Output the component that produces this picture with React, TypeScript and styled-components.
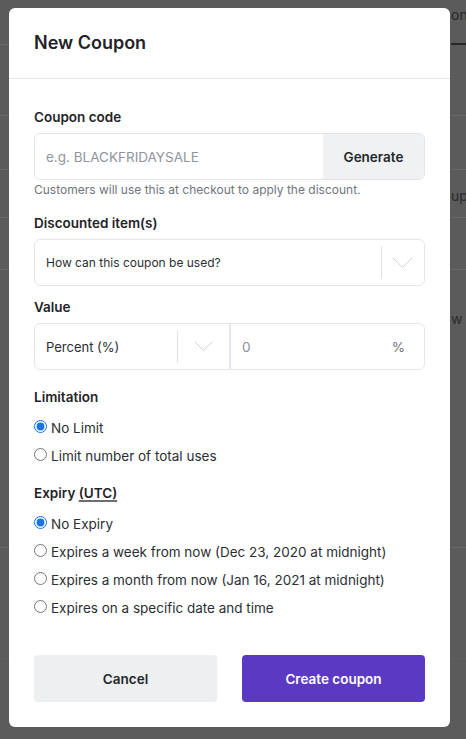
import React from "react";
import styled, { createGlobalStyle } from "styled-components";

const Global = createGlobalStyle`
  html, body { margin: 0; padding: 0; }
  body {
    background: #5b5b5b;
    font-family: Inter, "Noto Sans", "Liberation Sans", sans-serif;
    -webkit-font-smoothing: antialiased;
    overflow: hidden;
  }
  #root { position: relative; width: 466px; height: 739px; overflow: hidden; }
`;

/* ---------- dimmed page behind the modal ---------- */
const Backdrop = styled.div`
  display: flex;
  flex-direction: column;
  width: 466px;
  height: 739px;
  color: #262626;
  font-size: 14px;
`;

const BgHeader = styled.div`
  height: 44px;
  display: flex;
  align-items: flex-start;
  border-bottom: 1px solid #686868;
`;

const BgTab = styled.div`
  margin-left: 451px;
  padding-top: 5px;
  height: 38px;
  flex: 1;
  border-bottom: 2px solid #262626;
  white-space: nowrap;
  overflow: hidden;
  line-height: 20px;
`;

const BgRow = styled.div<{ $h: number; $pt?: number; $faint?: boolean }>`
  height: ${(p) => p.$h}px;
  box-sizing: border-box;
  flex-shrink: 0;
  padding-left: 451px;
  padding-top: ${(p) => p.$pt ?? 0}px;
  line-height: 20px;
  white-space: nowrap;
  overflow: hidden;
  border-bottom: 1px solid ${(p) => (p.$faint ? "#606060" : "#686868")};
  color: #2a2a2a;
`;

/* ---------- modal ---------- */
const Modal = styled.div`
  position: absolute;
  top: 8px;
  left: 9px;
  width: 441px;
  height: 719px;
  background: #ffffff;
  border-radius: 6px;
  display: flex;
  flex-direction: column;
  overflow: hidden;
`;

const Header = styled.div`
  padding: 23px 25px 23px;
  border-bottom: 1px solid #e3e8ee;
`;

const Title = styled.h2`
  margin: 0;
  font-size: 18px;
  line-height: 24px;
  font-weight: 600;
  color: #1f2328;
`;

const Body = styled.div`
  padding: 28px 25px 25px;
  display: flex;
  flex-direction: column;
  flex: 1;
`;

const Group = styled.div<{ $mt?: number }>`
  display: flex;
  flex-direction: column;
  margin-top: ${(p) => p.$mt ?? 0}px;
`;

const Label = styled.div`
  font-size: 13.5px;
  line-height: 20px;
  font-weight: 600;
  color: #1f2328;
  margin-bottom: 6px;
`;

const Underlined = styled.span`
  text-decoration: underline;
  text-decoration-thickness: 1.5px;
  text-underline-offset: 2px;
  text-decoration-color: #6b6f74;
`;

const InputGroup = styled.div`
  display: flex;
  height: 47px;
  border: 1px solid #e2e5e9;
  border-radius: 6px;
  box-sizing: border-box;
  overflow: hidden;
`;

const TextInput = styled.input`
  flex: 1;
  min-width: 0;
  border: none;
  outline: none;
  padding: 0 11px;
  font-family: inherit;
  font-size: 13.5px;
  color: #1f2328;
  background: transparent;
  &::placeholder { color: #8f959c; }
`;

const GenerateButton = styled.button`
  width: 101px;
  border: none;
  background: #eff1f3;
  font-family: inherit;
  font-size: 13.5px;
  font-weight: 600;
  color: #23272b;
  padding: 0;
`;

const Help = styled.div`
  margin-top: 2px;
  font-size: 12px;
  line-height: 16px;
  color: #6f757c;
`;

const SelectBox = styled.div<{ $w?: number; $joined?: "left" | "right"; $small?: boolean }>`
  display: flex;
  align-items: center;
  height: 47px;
  box-sizing: border-box;
  border: 1px solid #e2e5e9;
  border-radius: ${(p) =>
    p.$joined === "left" ? "6px 0 0 6px" : p.$joined === "right" ? "0 6px 6px 0" : "6px"};
  ${(p) => (p.$w ? `width: ${p.$w}px;` : "flex-grow: 1;")}
  flex-shrink: 0;
  font-size: ${(p) => (p.$small ? "12px" : "13px")};
  color: #2b2f33;
`;

const SelectValue = styled.div`
  flex: 1;
  padding-left: 11px;
  white-space: nowrap;
`;

const Indicator = styled.div<{ $w: number }>`
  width: ${(p) => p.$w}px;
  align-self: stretch;
  display: flex;
  align-items: center;
  justify-content: center;
  position: relative;
  &::before {
    content: "";
    position: absolute;
    left: 0;
    top: 6px;
    bottom: 6px;
    width: 1px;
    background: #dfe2e6;
  }
`;

const ValueRow = styled.div`
  display: flex;
`;

const NumberValue = styled.div`
  flex: 1;
  padding-left: 11px;
  font-size: 13.5px;
  color: #8a9097;
`;

const Suffix = styled.div`
  padding-right: 19px;
  font-size: 13.5px;
  color: #6f757c;
`;

const RadioList = styled.div`
  display: flex;
  flex-direction: column;
  gap: 8px;
  margin-top: 5px;
`;

const RadioRow = styled.label`
  display: flex;
  align-items: center;
  gap: 4px;
  font-size: 13.5px;
  line-height: 20px;
  color: #2b2f33;
`;

const RadioInput = styled.input`
  margin: -3px 0 0 0;
  width: 13px;
  height: 13px;
  accent-color: #1a73e8;
`;

const Footer = styled.div`
  margin-top: auto;
  display: flex;
  justify-content: space-between;
`;

const Button = styled.button<{ $primary?: boolean }>`
  width: 183px;
  height: 47px;
  border: none;
  border-radius: 4px;
  font-family: inherit;
  font-size: 13.5px;
  font-weight: 600;
  background: ${(p) => (p.$primary ? "#5c39c3" : "#eeeff1")};
  color: ${(p) => (p.$primary ? "#ffffff" : "#23272b")};
`;

const Chevron = ({ w }: { w: number }) => (
  <svg width={w} height={w / 2 + 1} viewBox={`0 0 ${w} ${w / 2 + 1}`} fill="none">
    <polyline points={`0.5,0.5 ${w / 2},${w / 2} ${w - 0.5},0.5`} stroke="#cfd3d7" strokeWidth="1" />
  </svg>
);

const Radio = ({ name, label, checked }: { name: string; label: string; checked?: boolean }) => (
  <RadioRow>
    <RadioInput type="radio" name={name} defaultChecked={checked} />
    {label}
  </RadioRow>
);

export default function App() {
  return (
    <>
      <Global />
      <Backdrop>
        <BgHeader>
          <BgTab>ons</BgTab>
        </BgHeader>
        <BgRow $h={71} />
        <BgRow $h={54} />
        <BgRow $h={48} $pt={16}>up</BgRow>
        <BgRow $h={52} />
        <BgRow $h={278} $pt={39}>w a</BgRow>
        <BgRow $h={111} $faint />
      </Backdrop>
      <Modal>
        <Header>
          <Title>New Coupon</Title>
        </Header>
        <Body>
          <Group>
            <Label>Coupon code</Label>
            <InputGroup>
              <TextInput placeholder="e.g. BLACKFRIDAYSALE" />
              <GenerateButton>Generate</GenerateButton>
            </InputGroup>
            <Help>Customers will use this at checkout to apply the discount.</Help>
          </Group>
          <Group $mt={15}>
            <Label>Discounted item(s)</Label>
            <SelectBox $small>
              <SelectValue>How can this coupon be used?</SelectValue>
              <Indicator $w={43}>
                <Chevron w={21} />
              </Indicator>
            </SelectBox>
          </Group>
          <Group $mt={11}>
            <Label>Value</Label>
            <ValueRow>
              <SelectBox $w={196} $joined="left">
                <SelectValue>Percent (%)</SelectValue>
                <Indicator $w={52}>
                  <Chevron w={19} />
                </Indicator>
              </SelectBox>
              <SelectBox $joined="right">
                <NumberValue>0</NumberValue>
                <Suffix>%</Suffix>
              </SelectBox>
            </ValueRow>
          </Group>
          <Group $mt={17}>
            <Label>Limitation</Label>
            <RadioList>
              <Radio name="limit" label="No Limit" checked />
              <Radio name="limit" label="Limit number of total uses" />
            </RadioList>
          </Group>
          <Group $mt={17}>
            <Label>
              Expiry <Underlined>(UTC)</Underlined>
            </Label>
            <RadioList>
              <Radio name="expiry" label="No Expiry" checked />
              <Radio name="expiry" label="Expires a week from now (Dec 23, 2020 at midnight)" />
              <Radio name="expiry" label="Expires a month from now (Jan 16, 2021 at midnight)" />
              <Radio name="expiry" label="Expires on a specific date and time" />
            </RadioList>
          </Group>
          <Footer>
            <Button>Cancel</Button>
            <Button $primary>Create coupon</Button>
          </Footer>
        </Body>
      </Modal>
    </>
  );
}
